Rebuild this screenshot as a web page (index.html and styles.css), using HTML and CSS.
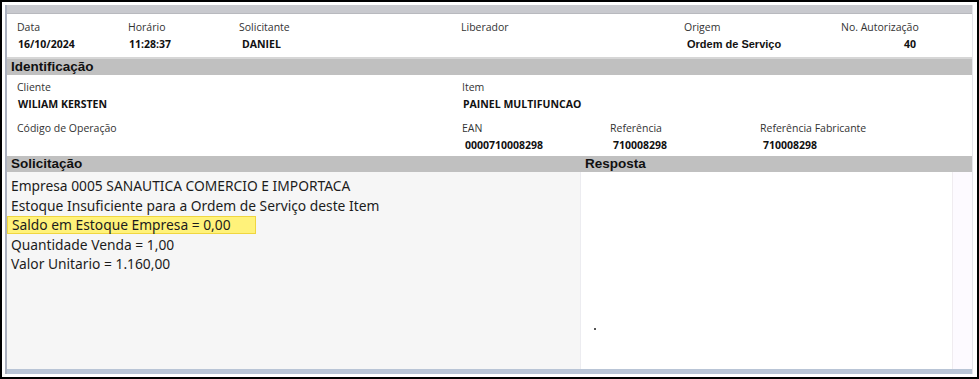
FILE: index.html
```html
<!DOCTYPE html>
<html lang="pt-BR">
<head>
    <meta charset="UTF-8">
    <title>Autorização</title>
    <link rel="stylesheet" href="styles.css">
</head>
<body>
    <div class="screen">
        <div class="frame">
            <div class="top-bar"></div>

            <!-- Cabeçalho -->
            <div class="header-row">
                <div class="field w-data"><span class="label">Data</span><span class="value">16/10/2024</span></div>
                <div class="field w-hora"><span class="label">Horário</span><span class="value">11:28:37</span></div>
                <div class="field w-solic"><span class="label">Solicitante</span><span class="value pad">DANIEL</span></div>
                <div class="field w-lib"><span class="label">Liberador</span><span class="value"></span></div>
                <div class="field w-orig"><span class="label">Origem</span><span class="value alt">Ordem de Serviço</span></div>
                <div class="field w-aut"><span class="label">No. Autorização</span><span class="value num">40</span></div>
            </div>

            <div class="section-bar">Identificação</div>

            <div class="ident">
                <div class="ident-row">
                    <div class="field w-left"><span class="label">Cliente</span><span class="value">WILIAM KERSTEN</span></div>
                    <div class="field"><span class="label">Item</span><span class="value">PAINEL MULTIFUNCAO</span></div>
                </div>
                <div class="ident-row">
                    <div class="field w-left"><span class="label">Código de Operação</span><span class="value"></span></div>
                    <div class="field w-ean"><span class="label">EAN</span><span class="value pad">0000710008298</span></div>
                    <div class="field w-ref"><span class="label">Referência</span><span class="value pad">710008298</span></div>
                    <div class="field"><span class="label">Referência Fabricante</span><span class="value pad">710008298</span></div>
                </div>
            </div>

            <div class="section-bar split">
                <span class="bar-left">Solicitação</span>
                <span class="bar-right">Resposta</span>
            </div>

            <div class="panels">
                <div class="panel-left">
                    <p>Empresa 0005 SANAUTICA COMERCIO E IMPORTACA</p>
                    <p>Estoque Insuficiente para a Ordem de Serviço deste Item</p>
                    <p><span class="mark">Saldo em Estoque Empresa = 0,00</span></p>
                    <p>Quantidade Venda = 1,00</p>
                    <p>Valor Unitario = 1.160,00</p>
                </div>
                <div class="panel-right">
                    <span class="dot"></span>
                </div>
                <div class="panel-edge"></div>
            </div>

            <div class="bottom-bar"></div>
        </div>
    </div>
</body>
</html>
```

FILE: styles.css
```css
body {
    margin: 0;
    background-color: #fff;
    font-family: "Open Sans", "Noto Sans", sans-serif;
    color: #1a1a1a;
}

.screen {
    width: 979px;
    height: 379px;
    box-sizing: border-box;
    border: 2px solid #000;
    padding: 3px 4px 3px 3px;
    background-color: #fff;
}

.frame {
    height: 100%;
    display: flex;
    flex-direction: column;
    border-left: 2px solid #aab0bf;
    border-right: 1px solid #e4e4ea;
}

.top-bar {
    height: 8px;
    background-color: #c8c9ce;
    border-bottom: 1px solid #b8b9be;
}

.field {
    display: flex;
    flex-direction: column;
}

.label {
    font-size: 10.5px;
    line-height: 18px;
    color: #333;
}

.value {
    font-size: 10.5px;
    font-weight: 700;
    line-height: 17px;
    min-height: 17px;
    color: #111;
    padding-left: 1px;
}

.value.pad {
    padding-left: 3px;
}

.value.alt {
    font-family: "Liberation Sans", Arial, sans-serif;
    font-size: 11px;
    padding-left: 3px;
}

.value.num {
    text-align: right;
    padding-right: 56px;
}

/* cabeçalho */
.header-row {
    display: flex;
    padding: 4px 0 0 10px;
    height: 39px;
    border-bottom: 2px solid #d6d6d6;
}

.w-data { width: 111px; }
.w-hora { width: 111px; }
.w-solic { width: 222px; }
.w-lib { width: 223px; }
.w-orig { width: 157px; }
.w-aut { flex: 1; }

.section-bar {
    height: 16px;
    background-color: #c0c0c0;
    font-family: "Liberation Sans", Arial, sans-serif;
    font-weight: 700;
    font-size: 13.5px;
    line-height: 16px;
    padding-left: 4px;
    color: #111;
}

.section-bar.split {
    display: flex;
    padding-left: 4px;
    margin-top: 1px;
}

.bar-left {
    width: 574px;
}

/* identificação */
.ident {
    padding: 3px 0 2px 10px;
    height: 75px;
    display: flex;
    flex-direction: column;
    gap: 6px;
}

.ident-row {
    display: flex;
}

.w-left { width: 445px; }
.w-ean { width: 148px; }
.w-ref { width: 150px; }

/* painéis */
.panels {
    flex: 1;
    display: flex;
}

.panel-left {
    width: 569px;
    background-color: #f6f6f6;
    padding: 4px 0 0 4px;
    border-right: 1px solid #ececf0;
}

.panel-left p {
    margin: 0;
    font-family: "Noto Sans", "Open Sans", sans-serif;
    font-size: 13.8px;
    line-height: 19.5px;
    color: #1c1c1c;
}

.mark {
    display: inline-block;
    background-color: #fff27a;
    border: 1px solid #f0d640;
    margin-left: -4px;
    padding: 0 24px 0 4px;
    line-height: 16px;
}

.panel-right {
    flex: 1;
    position: relative;
    background-color: #fff;
    border-right: 1px solid #f0ecf0;
}

.dot {
    position: absolute;
    left: 13px;
    top: 156px;
    width: 2px;
    height: 2px;
    background-color: #555;
}

.panel-edge {
    width: 19px;
    background-color: #fdfaff;
}

.bottom-bar {
    height: 5px;
    background-color: #b9c5d6;
}
```
